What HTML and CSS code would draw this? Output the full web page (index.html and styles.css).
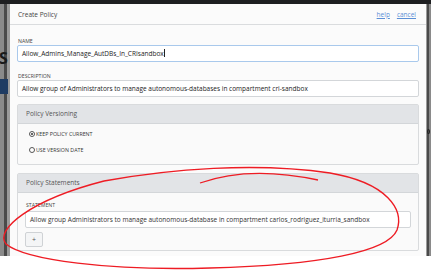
FILE: index.html
```html
<!DOCTYPE html>
<html>
<head>
<meta charset="utf-8">
<link rel="stylesheet" href="styles.css">
</head>
<body>
<div class="screen">
  <div class="topbar"></div>
  <div class="stage">
    <div class="side-left">
      <span class="side-s">S</span>
      <span class="side-blue"></span>
    </div>
    <div class="modal">
      <div class="modal-head">
        <span class="modal-title">Create Policy</span>
        <span class="links"><a class="link">help</a><a class="link">cancel</a></span>
      </div>
      <div class="modal-body">
        <div class="field">
          <div class="label">NAME</div>
          <div class="input focused">Allow_Admins_Manage_AutDBs_In_CRIsandbox<span class="caret"></span></div>
        </div>
        <div class="field">
          <div class="label">DESCRIPTION</div>
          <div class="input">Allow group of Administrators to manage autonomous-databases in compartment cri-sandbox</div>
        </div>
        <div class="panel panel-versioning">
          <div class="panel-head">Policy Versioning</div>
          <div class="panel-body radios">
            <div class="radio-row"><span class="radio checked"></span><span class="radio-label">KEEP POLICY CURRENT</span></div>
            <div class="radio-row"><span class="radio"></span><span class="radio-label">USE VERSION DATE</span></div>
          </div>
        </div>
        <div class="panel panel-statements">
          <div class="panel-head">Policy Statements</div>
          <div class="panel-body statements">
            <div class="label">STATEMENT</div>
            <div class="input">Allow group Administrators to manage autonomous-database in compartment carlos_rodriguez_iturria_sandbox</div>
            <div class="add-btn">+</div>
          </div>
        </div>
      </div>
    </div>
    <div class="side-right"><span class="side-mark"></span></div>
  </div>
  <svg class="annot" width="431" height="272" viewBox="0 0 431 272">
    <path d="M 104 181 C 170 169 255 162 330 173 C 388 183 404 210 397 230 C 388 252 320 265 210 268 C 110 271 25 260 6 244 C -6 230 30 200 104 181" fill="none" stroke="#ee1c24" stroke-width="1.4"/>
    <path d="M 200 183 C 225 174 262 168 318 180" fill="none" stroke="#ee1c24" stroke-width="1.3"/>
  </svg>
</div>
</body>
</html>
```

FILE: styles.css
```css
* { box-sizing: border-box; }
html, body { margin: 0; padding: 0; background: #ffffff; }
body { font-family: "Open Sans", "Noto Sans", sans-serif; color: #333; }

.screen { position: relative; width: 431px; height: 272px; overflow: hidden; background: #fff; }
.topbar { height: 4px; background: #1e1f21; }
.stage { display: flex; height: 252px; }

.side-left {
  width: 10px;
  background: linear-gradient(90deg, #8a8a8a 0, #8a8a8a 4px, #4a4a4a 4px, #4a4a4a 7px, #9a9a9a 7px);
  display: flex; flex-direction: column;
}
.side-s {
  margin-top: 47px; font-size: 16px; font-weight: 700; line-height: 14px;
  color: #1a1a1a; margin-left: -1px;
}
.side-blue { margin-top: 14px; width: 8px; height: 15px; background: #1f3c63; }

.side-right {
  width: 5px;
  background: linear-gradient(90deg, #9a9a9a 0, #9a9a9a 1px, #4a4a4a 1px, #4a4a4a 3px, #8a8a8a 3px);
  display: flex; flex-direction: column;
}
.side-mark { margin-top: 125px; width: 3px; height: 5px; border: 1px solid #222; border-radius: 50%; margin-left: 1px; }

.modal { width: 416px; background: #fbfbfb; }
.modal-head {
  height: 21px; border-bottom: 1px solid #dadcde;
  display: flex; align-items: center; justify-content: space-between;
  padding: 0 10px 0 8px; font-size: 6.5px;
}
.modal-title { color: #444; }
.links { display: flex; gap: 7px; }
.link { color: #5b8fd6; text-decoration: underline; }

.modal-body { padding: 12px 7px 0; }
.field { margin-bottom: 10px; }
.field + .field { margin-bottom: 7px; }
.label { font-size: 5.2px; line-height: 8px; color: #444; padding-left: 1px; }
.input {
  height: 17px; border: 1px solid #d3d6d9; border-radius: 2px; background: #fff;
  font-size: 6.5px; line-height: 15px; padding-left: 4px; color: #222; white-space: nowrap; overflow: hidden;
}
.input.focused { border-color: #a9c9ec; }
.caret { display: inline-block; width: 1px; height: 8px; background: #222; vertical-align: -1px; }

.panel { border: 1px solid #d9dbdd; border-radius: 2px; background: #fafafa; }
.panel-head {
  height: 19px; background: #e2e4e7; border-bottom: 1px solid #d3d6d9;
  font-size: 6.5px; line-height: 18px; padding-left: 8px; color: #555;
}
.panel-versioning { height: 61px; margin-bottom: 8px; }
.radios { padding: 2px 11px 0; }
.radio-row { display: flex; align-items: center; height: 16px; gap: 1px; }
.radio { width: 6px; height: 6px; border-radius: 50%; border: 1px solid #555; background: #fff; position: relative; }
.radio.checked::after { content: ""; position: absolute; left: 1px; top: 1px; width: 2px; height: 2px; border-radius: 50%; background: #333; }
.radio-label { font-size: 5.3px; color: #333; }

.panel-statements { height: 78px; }
.statements { padding: 7px 7px 0; }
.statements .label { line-height: 11px; }
.statements .input { color: #333; }
.add-btn {
  margin-top: 4px; width: 18px; height: 15px; border: 1px solid #cfd2d5; border-radius: 2px;
  background: #f4f5f6; font-size: 7px; line-height: 13px; text-align: center; color: #555;
}

.annot { position: absolute; left: 0; top: 0; pointer-events: none; }
```
